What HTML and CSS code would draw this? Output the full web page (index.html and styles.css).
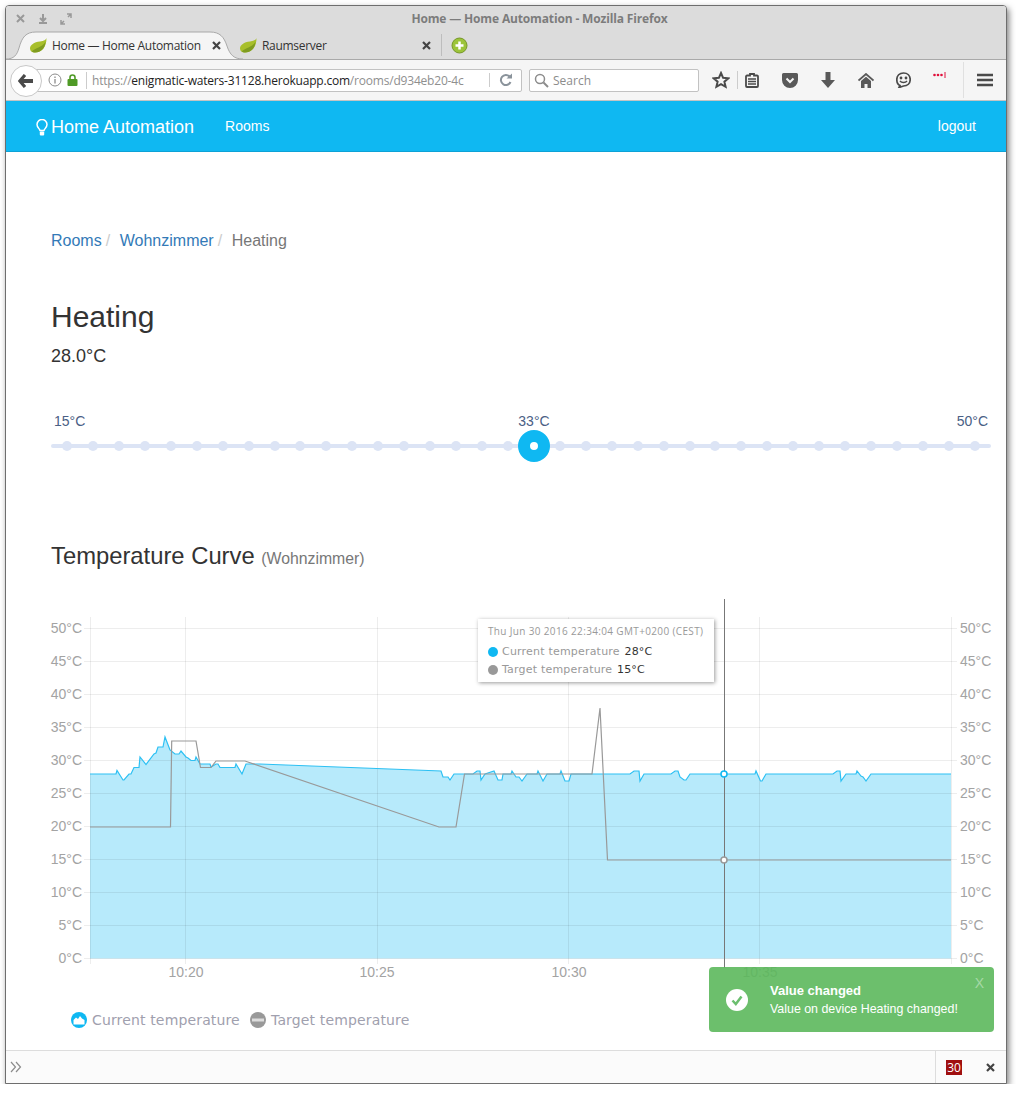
FILE: index.html
```html
<!DOCTYPE html>
<html lang="en">
<head>
    <meta charset="UTF-8">
    <meta name="viewport" content="width=device-width, initial-scale=1.0">
    <title>Home — Home Automation</title>
    <link rel="stylesheet" href="styles.css">
</head>
<body>
    <div class="window">
        <div class="titlebar">
            <div class="title-row">
                <div class="window-buttons">
                    <svg width="62" height="14" viewBox="0 0 62 14">
                        <path d="M4 3l7 7M11 3l-7 7" stroke="#999" stroke-width="2" fill="none"/>
                        <path d="M30 2v6M27 6l3 3 3-3M26 11h8" stroke="#999" stroke-width="2" fill="none"/>
                        <path d="M48 12l3-3M55 5l3-3M54 2h4v4M48 8v4h4" stroke="#999" stroke-width="1.5" fill="none"/>
                    </svg>
                </div>
                <div class="window-title">Home — Home Automation - Mozilla Firefox</div>
            </div>
            <div class="tabs">
                <div class="tab tab-active">
                    <svg class="tab-shape" width="237" height="29" viewBox="0 0 237 29">
                        <path d="M0 28C8 28 11 24 13 17C16 6 20 1 30 1H204C214 1 218 6 221 15C224 24 228 28 237 28" fill="#f5f5f5" stroke="#a9a9a9"/>
                    </svg>
                    <svg class="leaf" width="17" height="15" viewBox="0 0 17 15">
                        <path d="M16.500 0C16 2 14 3 10 3.500C4 4 0 7 0 10.500C0 13 2 14.500 5 14.500C12 14.500 16.500 9 16.500 0Z" fill="#a8bf2b"/>
                        <path d="M1.500 13.500C6 9.500 11 10 15.500 4C15 10 11 14.500 5 14.500C3.500 14.500 2.500 14 1.500 13.500Z" fill="#7f9c20"/>
                    </svg>
                    <span class="tab-label">Home — Home Automation</span>
                    <svg class="close-icon" width="9" height="9" viewBox="0 0 9 9">
                        <path d="M1 1l7 7M8 1l-7 7" stroke="#444" stroke-width="2.200"/>
                    </svg>
                </div>
                <div class="tab tab-second">
                    <svg class="leaf" width="17" height="15" viewBox="0 0 17 15">
                        <path d="M16.500 0C16 2 14 3 10 3.500C4 4 0 7 0 10.500C0 13 2 14.500 5 14.500C12 14.500 16.500 9 16.500 0Z" fill="#a8bf2b"/>
                        <path d="M1.500 13.500C6 9.500 11 10 15.500 4C15 10 11 14.500 5 14.500C3.500 14.500 2.500 14 1.500 13.500Z" fill="#7f9c20"/>
                    </svg>
                    <span class="tab-label">Raumserver</span>
                    <svg class="close-icon" width="9" height="9" viewBox="0 0 9 9">
                        <path d="M1 1l7 7M8 1l-7 7" stroke="#444" stroke-width="2.200"/>
                    </svg>
                </div>
                <div class="tab-new">
                    <svg width="17" height="17" viewBox="0 0 17 17">
                        <circle cx="8.500" cy="8.500" r="7.500" fill="#9cc43a" stroke="#76962a"/>
                        <path d="M8.500 4.500v8M4.500 8.500h8" stroke="#fff" stroke-width="2.500"/>
                    </svg>
                </div>
            </div>
        </div>

        <div class="toolbar">
            <div class="urlbar">
                <div class="back-button">
                    <svg width="16" height="14" viewBox="0 0 16 14">
                        <path d="M7 1L1.800 7L7 13" stroke="#4a4a4a" stroke-width="3.200" fill="none"/>
                        <path d="M2 7H15" stroke="#4a4a4a" stroke-width="4"/>
                    </svg>
                </div>
                <svg class="info-icon" width="14" height="14" viewBox="0 0 14 14">
                    <circle cx="7" cy="7" r="6" fill="none" stroke="#8c8c8c"/>
                    <path d="M7 6v4.500M7 3.500v1.500" stroke="#8c8c8c" stroke-width="1.300"/>
                </svg>
                <svg class="lock-icon" width="11" height="12" viewBox="0 0 11 12">
                    <path d="M3 5V3.500a2.500 2.500 0 0 1 5 0V5" stroke="#4f9a26" stroke-width="1.600" fill="none"/>
                    <rect x="0.500" y="5" width="10" height="7" rx="1" fill="#4f9a26"/>
                </svg>
                <div class="url"><span class="url-dim">https://</span>enigmatic-waters-31128.herokuapp.com<span class="url-dim">/rooms/d934eb20-4c</span></div>
                <svg class="reload-icon" width="14" height="14" viewBox="0 0 14 14">
                    <path d="M11.500 9A5 5 0 1 1 10.500 3.500" stroke="#8a939b" stroke-width="2" fill="none"/>
                    <path d="M7.500 5.500h5.500v-5z" fill="#8a939b"/>
                </svg>
            </div>
            <div class="searchbar">
                <svg width="15" height="15" viewBox="0 0 15 15">
                    <circle cx="6" cy="6" r="4.500" fill="none" stroke="#8c8c8c" stroke-width="1.500"/>
                    <path d="M9.500 9.500l4.500 4.500" stroke="#8c8c8c" stroke-width="2"/>
                </svg>
                <span>Search</span>
            </div>
            <div class="toolbar-icons">
                <svg class="icon-star" width="18" height="18" viewBox="0 0 18 18">
                    <path d="M9 2l2.100 4.800 5.200.5-3.900 3.400 1.200 5.100L9 13.100l-4.600 2.700 1.200-5.100-3.900-3.400 5.200-.5z" fill="none" stroke="#4a4a4a" stroke-width="2"/>
                </svg>
                <span class="tool-sep"></span>
                <svg class="icon-list" width="14" height="15" viewBox="0 0 14 15">
                    <path d="M2 2.500h3V1h4v1.500h3a1 1 0 0 1 1 1V13a1 1 0 0 1-1 1H2a1 1 0 0 1-1-1V3.500a1 1 0 0 1 1-1z" fill="none" stroke="#4a4a4a" stroke-width="1.800"/>
                    <path d="M3 6h8M3 8.500h8M3 11h8" stroke="#4a4a4a" stroke-width="1.500"/>
                </svg>
                <svg class="icon-pocket" width="16" height="15" viewBox="0 0 16 15">
                    <path d="M1.500 0h13A1.500 1.500 0 0 1 16 1.500V7A8 8 0 0 1 0 7V1.500A1.500 1.500 0 0 1 1.500 0z" fill="#595959"/>
                    <path d="M4.500 5.500L8 9l3.500-3.500" stroke="#f5f5f5" stroke-width="2" fill="none"/>
                </svg>
                <svg class="icon-down" width="14" height="16" viewBox="0 0 14 16">
                    <path d="M4.500 0h5v8H14l-7 8-7-8h4.500z" fill="#595959"/>
                </svg>
                <svg class="icon-home" width="16" height="15" viewBox="0 0 16 15">
                    <path d="M0.500 7.500L8 1l7.500 6.500" stroke="#595959" stroke-width="1.800" fill="none"/>
                    <path d="M3 8l5-4.300L13 8v7H9.500v-4h-3v4H3z" fill="#595959"/>
                </svg>
                <svg class="icon-smile" width="15" height="16" viewBox="0 0 15 16">
                    <path d="M4 13.500C1.500 12.500 0.800 10 0.800 7.500C0.800 3.500 3.500 1 7.500 1S14.200 3.500 14.200 7.500S11.500 14 7.500 14L3 15.500z" fill="none" stroke="#4a4a4a" stroke-width="1.700"/>
                    <circle cx="5" cy="6" r="1.400" fill="#4a4a4a"/>
                    <circle cx="10" cy="6" r="1.400" fill="#4a4a4a"/>
                    <path d="M4 9C5.500 11 9.500 11 11 9" stroke="#4a4a4a" stroke-width="1.400" fill="none"/>
                </svg>
                <svg class="icon-dots" width="13" height="6" viewBox="0 0 13 6">
                    <circle cx="1.500" cy="3" r="1.300" fill="#e0103c"/>
                    <circle cx="5" cy="3" r="1.300" fill="#e0103c"/>
                    <circle cx="8.500" cy="3" r="1.300" fill="#e0103c"/>
                    <path d="M12 0v6" stroke="#e0103c"/>
                </svg>
                <span class="tool-sep tool-sep-long"></span>
                <svg class="icon-menu" width="16" height="14" viewBox="0 0 16 14">
                    <path d="M0 2h16M0 7h16M0 12h16" stroke="#4a4a4a" stroke-width="2.500"/>
                </svg>
            </div>
        </div>

        <nav class="navbar">
            <a class="brand" href="#">
                <svg width="12" height="17" viewBox="0 0 12 17">
                    <path d="M4 11.500C3.500 9.500 1 8.500 1 5.500a5 5 0 0 1 10 0C11 8.500 8.500 9.500 8 11.500z" fill="none" stroke="#fff" stroke-width="1.500"/>
                    <rect x="3.800" y="12.500" width="4.400" height="4" rx="1" fill="#fff"/>
                </svg>
                Home Automation
            </a>
            <a class="nav-link" href="#">Rooms</a>
            <a class="nav-link nav-right" href="#">logout</a>
        </nav>

        <main class="content">
            <ol class="breadcrumb">
                <li><a href="#">Rooms</a></li>
                <li><a href="#">Wohnzimmer</a></li>
                <li class="current">Heating</li>
            </ol>

            <h1>Heating</h1>
            <p class="current-value">28.0°C</p>

            <div class="slider">
                <div class="slider-labels">
                    <span>15°C</span>
                    <span>50°C</span>
                </div>
                <div class="slider-track">
                    <i></i><i></i><i></i><i></i><i></i><i></i><i></i><i></i><i></i><i></i><i></i><i></i>
                    <i></i><i></i><i></i><i></i><i></i><i></i><i></i><i></i><i></i><i></i><i></i><i></i>
                    <i></i><i></i><i></i><i></i><i></i><i></i><i></i><i></i><i></i><i></i><i></i><i></i>
                </div>
                <div class="slider-handle" style="left: 51.38%">
                    <span class="handle-label">33°C</span>
                    <span class="handle-knob"></span>
                </div>
            </div>

            <h2>Temperature Curve <small>(Wohnzimmer)</small></h2>

            <div class="chart">
                <svg width="950" height="445" viewBox="45 595 950 445">
                    <!-- area -->
                    <path class="area" d="M90 774H116L117 770.500L123 780H124L129 774H131L134 767.500H139L140 757L146 764.500L154 754L156 753L158 747H163L165 737L170 750L175 754H179L181 751L186 757L188 758L191 760.500H195L196 757L200 764H210L211 767L216 764H218L220 767.500H235L236 764L242 774L246 764H260L441 771L443 777H448L450 780L454 774H473L477 771H480L481 780L485 774L494 771L498 780H502L503 774H511L512 771L516 777H519L522 781L527 774H537L538 771L543 781L547 774H560L561 771L565 781H569L571 774H630L634 771H639L640 781L644 774H671L675 771H678L680 777L684 780H686L690 774H755L756 771L760.500 781H762L766 774H833L837 771H840L841 781L846 774H856L857 771L861 776L863 777L866 781L871 774H951V958.500H90Z"/>
                    <!-- grid -->
                    <g class="grid">
                        <path d="M84 628.500H957M84 661.500H957M84 694.500H957M84 727.500H957M84 760.500H957M84 793.500H957M84 826.500H957M84 859.500H957M84 892.500H957M84 925.500H957M84 958.500H957"/>
                        <path d="M90.500 617V964M185.500 617V964M377.500 617V964M568.500 617V964M759.500 617V964M951.500 617V964"/>
                    </g>
                    <!-- series -->
                    <path class="line-current" d="M90 774H116L117 770.500L123 780H124L129 774H131L134 767.500H139L140 757L146 764.500L154 754L156 753L158 747H163L165 737L170 750L175 754H179L181 751L186 757L188 758L191 760.500H195L196 757L200 764H210L211 767L216 764H218L220 767.500H235L236 764L242 774L246 764H260L441 771L443 777H448L450 780L454 774H473L477 771H480L481 780L485 774L494 771L498 780H502L503 774H511L512 771L516 777H519L522 781L527 774H537L538 771L543 781L547 774H560L561 771L565 781H569L571 774H630L634 771H639L640 781L644 774H671L675 771H678L680 777L684 780H686L690 774H755L756 771L760.500 781H762L766 774H833L837 771H840L841 781L846 774H856L857 771L861 776L863 777L866 781L871 774H951"/>
                    <path class="line-target" d="M90 827H170.500L171.700 741H196L200.500 767.500H211L216 761H245L439 827H456L464.500 774H592L600 708L607.500 860H951"/>
                    <!-- crosshair -->
                    <path class="crosshair" d="M724.500 599V968"/>
                    <circle class="dot-current" cx="724" cy="774" r="3"/>
                    <circle class="dot-target" cx="724" cy="860" r="3"/>
                    <!-- axis labels -->
                    <g class="axis-left">
                        <text x="82" y="633">50°C</text>
                        <text x="82" y="666">45°C</text>
                        <text x="82" y="699">40°C</text>
                        <text x="82" y="732">35°C</text>
                        <text x="82" y="765">30°C</text>
                        <text x="82" y="798">25°C</text>
                        <text x="82" y="831">20°C</text>
                        <text x="82" y="864">15°C</text>
                        <text x="82" y="897">10°C</text>
                        <text x="82" y="930">5°C</text>
                        <text x="82" y="963">0°C</text>
                    </g>
                    <g class="axis-right">
                        <text x="960" y="633">50°C</text>
                        <text x="960" y="666">45°C</text>
                        <text x="960" y="699">40°C</text>
                        <text x="960" y="732">35°C</text>
                        <text x="960" y="765">30°C</text>
                        <text x="960" y="798">25°C</text>
                        <text x="960" y="831">20°C</text>
                        <text x="960" y="864">15°C</text>
                        <text x="960" y="897">10°C</text>
                        <text x="960" y="930">5°C</text>
                        <text x="960" y="963">0°C</text>
                    </g>
                    <g class="axis-bottom">
                        <text x="186" y="977">10:20</text>
                        <text x="377" y="977">10:25</text>
                        <text x="569" y="977">10:30</text>
                        <text x="760" y="977">10:35</text>
                    </g>
                    <!-- legend -->
                    <circle cx="79" cy="1020" r="8" fill="#0fb8f2"/>
                    <path d="M73.500 1024.500V1020L76 1017.500L78 1019L80 1016L82 1018.500L84.500 1020V1024.500Z" fill="#fff"/>
                    <text class="legend-text" x="92" y="1025">Current temperature</text>
                    <circle cx="258" cy="1020" r="8" fill="#999"/>
                    <path d="M252 1020H264" stroke="#ddd" stroke-width="3"/>
                    <text class="legend-text" x="271" y="1025">Target temperature</text>
                </svg>

                <div class="tooltip">
                    <div class="tooltip-date">Thu Jun 30 2016 22:34:04 GMT+0200 (CEST)</div>
                    <div class="tooltip-row"><i class="swatch swatch-current"></i>Current temperature <b>28°C</b></div>
                    <div class="tooltip-row"><i class="swatch swatch-target"></i>Target temperature <b>15°C</b></div>
                </div>
            </div>

            <div class="toast">
                <svg width="22" height="22" viewBox="0 0 22 22">
                    <circle cx="11" cy="11" r="11" fill="#fff"/>
                    <path d="M6.500 11.500L9.800 15L15.500 7.500" stroke="#6cbf6f" stroke-width="2.500" fill="none"/>
                </svg>
                <div class="toast-text">
                    <div class="toast-title">Value changed</div>
                    <div>Value on device Heating changed!</div>
                </div>
                <span class="toast-close">X</span>
            </div>
        </main>

        <div class="addon-bar">
            <svg width="12" height="12" viewBox="0 0 12 12">
                <path d="M1 1l4.500 5L1 11M6 1l4.500 5L6 11" stroke="#8c8c8c" stroke-width="1.200" fill="none"/>
            </svg>
            <div class="addon-right">
                <span class="addon-count">30</span>
                <svg class="addon-close" width="9" height="9" viewBox="0 0 9 9">
                    <path d="M1 1l7 7M8 1l-7 7" stroke="#444" stroke-width="2.200"/>
                </svg>
            </div>
        </div>
    </div>
</body>
</html>
```

FILE: styles.css
```css
html, body {
    margin: 0;
    padding: 0;
    background: #fff;
}

body {
    padding: 5px 0 0 5px;
    font-family: 'Liberation Sans', Arial, sans-serif;
    color: #333;
}

.window {
    width: 1000px;
    height: 1077px;
    border: 1px solid #6e6e6e;
    border-radius: 4px 4px 0 0;
    box-shadow: 2px 3px 6px rgba(0, 0, 0, 0.5);
    display: flex;
    flex-direction: column;
    overflow: hidden;
    background: #fff;
}

/* browser chrome */
.titlebar {
    background: #dcdcdc;
    height: 53px;
    border-bottom: 1px solid #a9a9a9;
    font-family: 'Open Sans', sans-serif;
}

.title-row {
    height: 25px;
    position: relative;
    display: flex;
    align-items: center;
    justify-content: center;
}

.window-buttons {
    position: absolute;
    left: 7px;
    top: 6px;
    line-height: 0;
}

.window-title {
    font-size: 12px;
    font-weight: bold;
    letter-spacing: -0.15px;
    color: #7c7c7c;
    margin-left: 67px;
}

.tabs {
    display: flex;
    align-items: center;
    height: 28px;
}

.tab {
    position: relative;
    display: flex;
    align-items: center;
    height: 28px;
    font-size: 12px;
    letter-spacing: -0.3px;
    color: #333;
}

.tab-active {
    width: 236px;
    box-sizing: border-box;
    padding: 0 21px 0 24px;
}

.tab-second {
    width: 202px;
    box-sizing: border-box;
    padding: 0 10px 0 0;
    margin-left: -2px;
    border-right: 1px solid #bdbdbd;
    height: 22px;
}

.tab-shape {
    position: absolute;
    left: 0;
    top: 0;
}

.leaf {
    position: relative;
    margin-right: 5px;
    flex: none;
}

.tab-label {
    position: relative;
    flex: 1;
    white-space: nowrap;
}

.close-icon {
    position: relative;
    flex: none;
}

.tab-new {
    margin-left: 9px;
    line-height: 0;
}

.toolbar {
    background: #f5f5f5;
    height: 40px;
    border-bottom: 1px solid #c4c4c4;
    display: flex;
    align-items: center;
    font-family: 'Open Sans', sans-serif;
    flex: none;
}

.urlbar {
    position: relative;
    margin-left: 16px;
    width: 500px;
    height: 23px;
    box-sizing: border-box;
    background: #fff;
    border: 1px solid #c2c2c2;
    border-radius: 2px;
    display: flex;
    align-items: center;
    padding-left: 25px;
}

.back-button {
    position: absolute;
    left: -13px;
    top: -5px;
    width: 30px;
    height: 30px;
    border-radius: 50%;
    background: #fff;
    border: 1px solid #c8c8c8;
    display: flex;
    align-items: center;
    justify-content: center;
}

.info-icon {
    margin-right: 5px;
    flex: none;
}

.lock-icon {
    margin-right: 8px;
    flex: none;
}

.url {
    border-left: 1px solid #ccc;
    padding-left: 5px;
    width: 372px;
    flex: none;
    overflow: hidden;
    white-space: nowrap;
    font-size: 12px;
    letter-spacing: -0.2px;
    line-height: 17px;
    color: #222;
}

.url-dim {
    color: #8f8f8f;
}

.reload-icon {
    margin-left: 25px;
    padding-left: 9px;
    border-left: 1px solid #ccc;
    flex: none;
}

.searchbar {
    margin-left: 7px;
    width: 170px;
    height: 23px;
    box-sizing: border-box;
    background: #fff;
    border: 1px solid #c2c2c2;
    border-radius: 2px;
    display: flex;
    align-items: center;
    padding-left: 4px;
    gap: 4px;
    font-size: 12px;
    color: #8c8c8c;
}

.toolbar-icons {
    flex: 1;
    display: flex;
    align-items: center;
    height: 40px;
}

.toolbar-icons svg {
    flex: none;
}

.icon-star { margin-left: 13px; }
.tool-sep {
    width: 1px;
    height: 18px;
    background: #ccc;
    margin-left: 7px;
}
.icon-list { margin-left: 7px; }
.icon-pocket { margin-left: 23px; }
.icon-down { margin-left: 23px; }
.icon-home { margin-left: 23px; }
.icon-smile { margin-left: 22px; }
.icon-dots { margin: -10px 0 0 22px; }
.tool-sep-long {
    height: 36px;
    background: #e0e0e0;
    margin-left: 17px;
}
.icon-menu { margin-left: 13px; }

/* navbar */
.navbar {
    flex: none;
    background: #0fb8f2;
    height: 50px;
    border-bottom: 1px solid #0da2d6;
    display: flex;
    align-items: center;
    padding: 0 30px;
}

.navbar a {
    color: #fff;
    text-decoration: none;
}

.brand {
    font-size: 18px;
    display: flex;
    align-items: center;
    gap: 3px;
    margin-top: 2px;
}

.nav-link {
    font-size: 14px;
    margin-left: 31px;
}

.nav-right {
    margin-left: auto;
}

/* page */
.content {
    flex: 1;
    position: relative;
    padding: 0 15px 0 45px;
    min-height: 0;
}

.breadcrumb {
    list-style: none;
    margin: 0;
    padding: 79px 0 0;
    display: flex;
    font-size: 16px;
    line-height: 20px;
}

.breadcrumb li + li::before {
    content: "/";
    color: #ccc;
    padding: 0 9.600px 0 4px;
}

.breadcrumb a {
    color: #337ab7;
    text-decoration: none;
}

.current {
    color: #777;
}

h1 {
    font-size: 30px;
    font-weight: 500;
    line-height: 33px;
    margin: 49px 0 0;
}

.current-value {
    font-size: 18px;
    line-height: 20px;
    margin: 13px 0 0;
}

.slider {
    position: relative;
    width: 940px;
    margin-top: 45px;
}

.slider-labels {
    display: flex;
    justify-content: space-between;
    font-size: 14px;
    line-height: 20px;
    color: #4a6085;
    padding: 0 3px;
}

.slider-track {
    margin-top: 13px;
    height: 4px;
    border-radius: 2px;
    background: #dce4f5;
    display: flex;
    justify-content: space-between;
    align-items: center;
    padding: 0 11px;
}

.slider-track i {
    width: 10px;
    height: 10px;
    border-radius: 50%;
    background: #dce4f5;
}

.slider-handle {
    position: absolute;
    top: 0;
    width: 0;
    display: flex;
    flex-direction: column;
    align-items: center;
}

.handle-label {
    font-size: 14px;
    line-height: 20px;
    color: #4a6085;
}

.handle-knob {
    flex: none;
    width: 8px;
    height: 8px;
    margin-top: -1px;
    background: #fff;
    border: 12px solid #0fb8f2;
    border-radius: 50%;
}

h2 {
    font-size: 23.800px;
    font-weight: 500;
    line-height: 26px;
    margin: 95px 0 0;
}

h2 small {
    font-size: 15.800px;
    font-weight: 400;
    color: #777;
}

.chart {
    position: relative;
    margin: 23px 0 0 -6px;
    width: 950px;
    height: 445px;
    line-height: 0;
}

.area {
    fill: rgba(15, 184, 242, 0.3);
}

.grid path {
    fill: none;
    stroke: rgba(0, 0, 0, 0.07);
    stroke-width: 1;
}

.line-current {
    fill: none;
    stroke: #2dc0f3;
    stroke-width: 1.200;
}

.line-target {
    fill: none;
    stroke: #999;
    stroke-width: 1.200;
}

.crosshair {
    stroke: #777;
    stroke-width: 1;
    fill: none;
}

.dot-current {
    fill: #fff;
    stroke: #0fb8f2;
    stroke-width: 1.500;
}

.dot-target {
    fill: #fff;
    stroke: #999;
    stroke-width: 1.500;
}

.chart text {
    font-size: 14px;
    fill: #a3a3a3;
}

.axis-left text {
    text-anchor: end;
}

.axis-bottom text {
    text-anchor: middle;
}

.chart .legend-text {
    font-family: 'DejaVu Sans', sans-serif;
    font-size: 14px;
    letter-spacing: 0.150px;
    fill: #a0a0ae;
}

.tooltip {
    position: absolute;
    left: 433px;
    top: 24px;
    width: 236px;
    height: 63px;
    box-sizing: border-box;
    padding: 6px 10px;
    background: #fff;
    box-shadow: 1px 1px 4px rgba(0, 0, 0, 0.4);
    font-family: 'DejaVu Sans', sans-serif;
    color: #999;
}

.tooltip-date {
    font-family: 'Open Sans', sans-serif;
    font-size: 10px;
    letter-spacing: 0.350px;
    line-height: 13px;
    margin-bottom: 5px;
    white-space: nowrap;
}

.tooltip-row {
    font-size: 11px;
    letter-spacing: 0.200px;
    line-height: 18px;
    display: flex;
    align-items: center;
    white-space: pre;
}

.tooltip-row b {
    font-weight: 400;
    color: #333;
    margin-left: 1px;
}

.swatch {
    width: 10px;
    height: 10px;
    border-radius: 50%;
    margin-right: 4px;
}

.swatch-current { background: #0fb8f2; }
.swatch-target { background: #999; }

.toast {
    position: absolute;
    left: 703px;
    top: 815px;
    width: 285px;
    height: 65px;
    box-sizing: border-box;
    padding: 0 0 0 17px;
    display: flex;
    align-items: center;
    background: rgba(92, 184, 92, 0.9);
    border-radius: 4px;
    color: #fff;
    font-size: 12.400px;
}

.toast-text {
    margin-left: 22px;
    line-height: 18px;
}

.toast-title {
    font-size: 13px;
    font-weight: bold;
}

.toast-close {
    position: absolute;
    right: 10px;
    top: 8px;
    font-size: 14px;
    color: rgba(255, 255, 255, 0.4);
}

/* add-on bar */
.addon-bar {
    flex: none;
    height: 32px;
    background: #fbfbfb;
    border-top: 1px solid #ddd;
    display: flex;
    align-items: center;
    padding-left: 4px;
}

.addon-right {
    margin-left: auto;
    height: 32px;
    border-left: 1px solid #ddd;
    display: flex;
    align-items: center;
    width: 71px;
    padding-left: 10px;
    box-sizing: border-box;
}

.addon-count {
    background: #a01010;
    color: #fff;
    font-family: 'Open Sans', sans-serif;
    font-size: 12px;
    line-height: 15px;
    width: 16px;
    text-align: center;
}

.addon-close {
    margin-left: 24px;
}
```
